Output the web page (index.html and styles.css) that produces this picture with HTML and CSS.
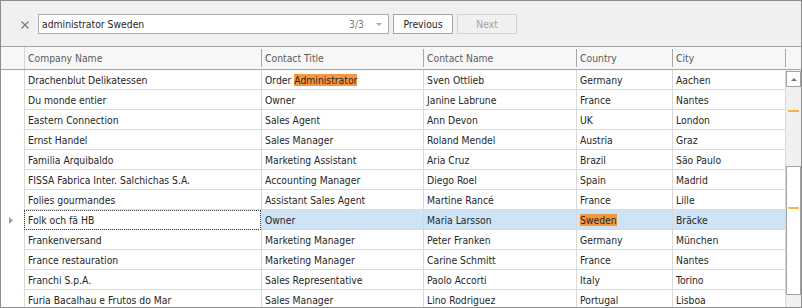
FILE: index.html
```html
<!DOCTYPE html>
<html lang="en">
<head>
    <meta charset="UTF-8">
    <title>Find Panel</title>
    <link rel="stylesheet" href="styles.css">
</head>
<body>

    <div class="grid">
        <div class="find-panel">
            <span class="close">
                <svg width="8" height="8" viewBox="0 0 8 8"><path d="M0.5 0.5 L7.5 7.5 M7.5 0.5 L0.5 7.5" stroke="#7a7a7a" stroke-width="1.2" fill="none"/></svg>
            </span>
            <div class="search-box">
                <span class="search-text">administrator Sweden</span>
                <span class="count">3/3</span>
                <span class="arrow"></span>
            </div>
            <div class="btn">Previous</div>
            <div class="btn disabled">Next</div>
        </div>

        <div class="header">
            <div class="hindicator"></div>
            <div class="hcell first">Company Name</div>
            <div class="hcell">Contact Title</div>
            <div class="hcell">Contact Name</div>
            <div class="hcell">Country</div>
            <div class="hcell">City</div>
            <div class="hcell"></div>
        </div>

        <div class="body">
            <div class="rows">
                <div class="row">
                    <div class="indicator"></div>
                    <div class="cell">Drachenblut Delikatessen</div>
                    <div class="cell">Order&nbsp;<span class="hl">Administrator</span></div>
                    <div class="cell">Sven Ottlieb</div>
                    <div class="cell">Germany</div>
                    <div class="cell last">Aachen</div>
                </div>
                <div class="row">
                    <div class="indicator"></div>
                    <div class="cell">Du monde entier</div>
                    <div class="cell">Owner</div>
                    <div class="cell">Janine Labrune</div>
                    <div class="cell">France</div>
                    <div class="cell last">Nantes</div>
                </div>
                <div class="row">
                    <div class="indicator"></div>
                    <div class="cell">Eastern Connection</div>
                    <div class="cell">Sales Agent</div>
                    <div class="cell">Ann Devon</div>
                    <div class="cell">UK</div>
                    <div class="cell last">London</div>
                </div>
                <div class="row">
                    <div class="indicator"></div>
                    <div class="cell">Ernst Handel</div>
                    <div class="cell">Sales Manager</div>
                    <div class="cell">Roland Mendel</div>
                    <div class="cell">Austria</div>
                    <div class="cell last">Graz</div>
                </div>
                <div class="row">
                    <div class="indicator"></div>
                    <div class="cell">Familia Arquibaldo</div>
                    <div class="cell">Marketing Assistant</div>
                    <div class="cell">Aria Cruz</div>
                    <div class="cell">Brazil</div>
                    <div class="cell last">São Paulo</div>
                </div>
                <div class="row">
                    <div class="indicator"></div>
                    <div class="cell">FISSA Fabrica Inter. Salchichas S.A.</div>
                    <div class="cell">Accounting Manager</div>
                    <div class="cell">Diego Roel</div>
                    <div class="cell">Spain</div>
                    <div class="cell last">Madrid</div>
                </div>
                <div class="row">
                    <div class="indicator"></div>
                    <div class="cell">Folies gourmandes</div>
                    <div class="cell">Assistant Sales Agent</div>
                    <div class="cell">Martine Rancé</div>
                    <div class="cell">France</div>
                    <div class="cell last">Lille</div>
                </div>
                <div class="row selected">
                    <div class="indicator">
                        <svg width="4" height="7" viewBox="0 0 4 7"><polygon points="0,0 4,3.5 0,7" fill="#9c9c9c"/></svg>
                    </div>
                    <div class="cell focused">Folk och fä HB</div>
                    <div class="cell">Owner</div>
                    <div class="cell">Maria Larsson</div>
                    <div class="cell"><span class="hl">Sweden</span></div>
                    <div class="cell last">Bräcke</div>
                </div>
                <div class="row">
                    <div class="indicator"></div>
                    <div class="cell">Frankenversand</div>
                    <div class="cell">Marketing Manager</div>
                    <div class="cell">Peter Franken</div>
                    <div class="cell">Germany</div>
                    <div class="cell last">München</div>
                </div>
                <div class="row">
                    <div class="indicator"></div>
                    <div class="cell">France restauration</div>
                    <div class="cell">Marketing Manager</div>
                    <div class="cell">Carine Schmitt</div>
                    <div class="cell">France</div>
                    <div class="cell last">Nantes</div>
                </div>
                <div class="row">
                    <div class="indicator"></div>
                    <div class="cell">Franchi S.p.A.</div>
                    <div class="cell">Sales Representative</div>
                    <div class="cell">Paolo Accorti</div>
                    <div class="cell">Italy</div>
                    <div class="cell last">Torino</div>
                </div>
                <div class="row">
                    <div class="indicator"></div>
                    <div class="cell">Furia Bacalhau e Frutos do Mar</div>
                    <div class="cell">Sales Manager</div>
                    <div class="cell">Lino Rodriguez</div>
                    <div class="cell">Portugal</div>
                    <div class="cell last">Lisboa</div>
                </div>
            </div>

            <div class="scrollbar">
                <div class="up"><span class="up-arrow"></span></div>
                <div class="track"></div>
                <div class="thumb"></div>
                <div class="rest"></div>
                <div class="mark first-mark"></div>
                <div class="mark second-mark"></div>
            </div>
        </div>
    </div>

</body>
</html>
```

FILE: styles.css
```css
body {
    margin: 0px;
    font-family: "DejaVu Sans Condensed", "DejaVu Sans", sans-serif;
    font-size: 10.3px;
    color: #262626;
    background-color: #ffffff;
}

.grid {
    width: 802px;
    height: 308px;
    box-sizing: border-box;
    border: 1px solid #8c8c8c;
    display: flex;
    flex-direction: column;
    overflow: hidden;
}

.find-panel {
    height: 46px;
    flex-shrink: 0;
    box-sizing: border-box;
    border-bottom: 1px solid #a5a5a5;
    background-color: #f0f0f0;
    display: flex;
    align-items: flex-start;
    padding: 13px 0px 0px 20px;
}

.close {
    width: 8px;
    height: 8px;
    margin: 7px 9px 0px 0px;
    display: flex;
}

.search-box {
    width: 351px;
    height: 20px;
    box-sizing: border-box;
    border: 1px solid #ababab;
    background-color: #ffffff;
    display: flex;
    align-items: center;
    padding: 0px 6px 0px 3px;
}

.search-text {
    flex: 1;
}

.count {
    color: #7a7a7a;
    margin-right: 12px;
}

.arrow {
    width: 0px;
    height: 0px;
    border-left: 3px solid transparent;
    border-right: 3px solid transparent;
    border-top: 3px solid #a8a8a8;
    margin-top: 1px;
}

.btn {
    width: 60px;
    height: 20px;
    box-sizing: border-box;
    margin-left: 4px;
    border: 1px solid #a5a5a5;
    background-color: #fcfcfc;
    display: flex;
    align-items: center;
    justify-content: center;
}

.btn.disabled {
    border-color: #d0d0d0;
    background-color: #f0f0f0;
    color: #a3a3a3;
}

.header {
    height: 23px;
    flex-shrink: 0;
    box-sizing: border-box;
    border-bottom: 1px solid #a5a5a5;
    background-color: #f7f7f7;
    display: grid;
    grid-template-columns: 23px 237px 162px 153px 96px 113px 16px;
    align-items: center;
    color: #5c5c5c;
}

.hindicator {
    height: 100%;
}

.hcell {
    height: 18px;
    box-sizing: border-box;
    border-left: 1px solid #a8a8a8;
    padding-left: 3px;
    display: flex;
    align-items: center;
    white-space: nowrap;
}

.hcell.first {
    height: 22px;
    border-left-color: #d6d6d6;
}

.body {
    flex: 1;
    display: flex;
    overflow: hidden;
}

.rows {
    width: 785px;
}

.row {
    display: grid;
    grid-template-columns: 23px 237px 162px 153px 96px 114px;
    height: 20px;
}

.indicator {
    display: flex;
    align-items: center;
    justify-content: center;
    padding-right: 4px;
}

.cell {
    box-sizing: border-box;
    border-left: 1px solid #d9d9d9;
    border-bottom: 1px solid #d9d9d9;
    padding-left: 3px;
    display: flex;
    align-items: center;
    white-space: nowrap;
    overflow: hidden;
}

.cell.last {
    border-right: 1px solid #d9d9d9;
}

.selected .cell {
    background-color: #cde4f7;
}

.selected .cell.focused {
    background-color: #ffffff;
    outline: 1px dotted #404040;
    outline-offset: -1px;
}

.hl {
    background-color: #f7963f;
}

.scrollbar {
    width: 15px;
    position: relative;
    display: flex;
    flex-direction: column;
    background-color: #f0f0f0;
    padding-top: 1px;
}

.up {
    height: 16px;
    box-sizing: border-box;
    border: 1px solid #a3a3a3;
    background-color: #fdfdfd;
    display: flex;
    align-items: center;
    justify-content: center;
}

.up-arrow {
    width: 0px;
    height: 0px;
    border-left: 3px solid transparent;
    border-right: 3px solid transparent;
    border-bottom: 3px solid #7a7a7a;
}

.track {
    height: 79px;
}

.thumb {
    height: 129px;
    box-sizing: border-box;
    border: 1px solid #a3a3a3;
    background-color: #ffffff;
}

.rest {
    flex: 1;
}

.mark {
    position: absolute;
    left: 2px;
    width: 11px;
    height: 2px;
    background-color: #f6b54f;
}

.first-mark {
    top: 40px;
}

.second-mark {
    top: 137px;
}
```
